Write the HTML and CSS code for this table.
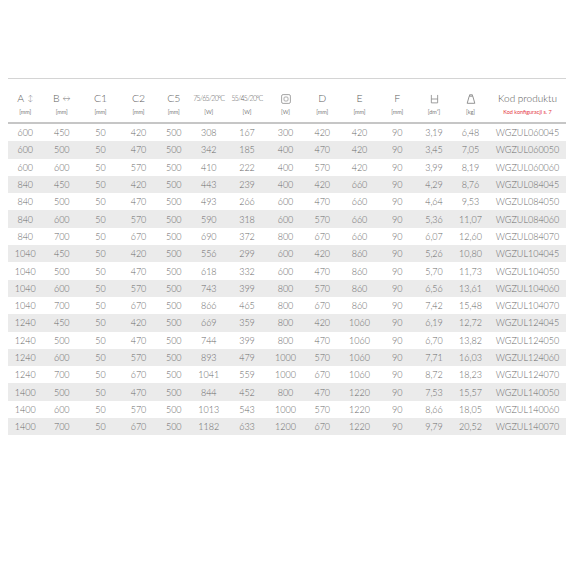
FILE: index.html
```html
<!DOCTYPE html>
<html>
<head>
<meta charset="utf-8">
<link rel="stylesheet" href="styles.css">
</head>
<body>
<div class="sheet">
  <div class="head">
    <div class="hc"><span class="lbl">A <span class="arr">↕</span></span><span class="unit">[mm]</span></div>
    <div class="hc"><span class="lbl">B <span class="arr">↔</span></span><span class="unit">[mm]</span></div>
    <div class="hc"><span class="lbl">C1</span><span class="unit">[mm]</span></div>
    <div class="hc"><span class="lbl">C2</span><span class="unit">[mm]</span></div>
    <div class="hc"><span class="lbl">C5</span><span class="unit">[mm]</span></div>
    <div class="hc"><span class="lbl tiny">75/65/20°C</span><span class="unit">[W]</span></div>
    <div class="hc"><span class="lbl tiny">55/45/20°C</span><span class="unit">[W]</span></div>
    <div class="hc"><span class="lbl"><svg class="ico" viewBox="0 0 10 10" width="10" height="10"><rect x="0.6" y="0.6" width="8.8" height="8.8" rx="1.5" fill="none" stroke="#9a9a9a" stroke-width="0.9"/><rect x="3" y="3" width="4" height="4" rx="1" fill="none" stroke="#9a9a9a" stroke-width="0.8"/></svg></span><span class="unit">[W]</span></div>
    <div class="hc"><span class="lbl">D</span><span class="unit">[mm]</span></div>
    <div class="hc"><span class="lbl">E</span><span class="unit">[mm]</span></div>
    <div class="hc"><span class="lbl">F</span><span class="unit">[mm]</span></div>
    <div class="hc"><span class="lbl"><svg class="ico" viewBox="0 0 10 10" width="9" height="10"><path d="M1.5 0.5V9.3H8.5V0.5M1.5 5H8.5" fill="none" stroke="#888" stroke-width="0.9"/></svg></span><span class="unit">[dm²]</span></div>
    <div class="hc"><span class="lbl"><svg class="ico" viewBox="0 0 10 10" width="10" height="10"><path d="M3.6 2.2V0.8H6.4V2.2M3.2 2.2H6.8L8.8 9.3H1.2Z" fill="none" stroke="#888" stroke-width="0.9" stroke-linejoin="round"/></svg></span><span class="unit">[kg]</span></div>
    <div class="hc"><span class="lbl kod">Kod produktu</span><span class="unit red">Kod konfiguracji s. 7</span></div>
  </div>
  <div class="body">
    <div class="row"><span>600</span><span>450</span><span>50</span><span>420</span><span>500</span><span>308</span><span>167</span><span>300</span><span>420</span><span>420</span><span>90</span><span>3,19</span><span>6,48</span><span>WGZUL060045</span></div>
    <div class="row"><span>600</span><span>500</span><span>50</span><span>470</span><span>500</span><span>342</span><span>185</span><span>400</span><span>470</span><span>420</span><span>90</span><span>3,45</span><span>7,05</span><span>WGZUL060050</span></div>
    <div class="row"><span>600</span><span>600</span><span>50</span><span>570</span><span>500</span><span>410</span><span>222</span><span>400</span><span>570</span><span>420</span><span>90</span><span>3,99</span><span>8,19</span><span>WGZUL060060</span></div>
    <div class="row"><span>840</span><span>450</span><span>50</span><span>420</span><span>500</span><span>443</span><span>239</span><span>400</span><span>420</span><span>660</span><span>90</span><span>4,29</span><span>8,76</span><span>WGZUL084045</span></div>
    <div class="row"><span>840</span><span>500</span><span>50</span><span>470</span><span>500</span><span>493</span><span>266</span><span>600</span><span>470</span><span>660</span><span>90</span><span>4,64</span><span>9,53</span><span>WGZUL084050</span></div>
    <div class="row"><span>840</span><span>600</span><span>50</span><span>570</span><span>500</span><span>590</span><span>318</span><span>600</span><span>570</span><span>660</span><span>90</span><span>5,36</span><span>11,07</span><span>WGZUL084060</span></div>
    <div class="row"><span>840</span><span>700</span><span>50</span><span>670</span><span>500</span><span>690</span><span>372</span><span>800</span><span>670</span><span>660</span><span>90</span><span>6,07</span><span>12,60</span><span>WGZUL084070</span></div>
    <div class="row"><span>1040</span><span>450</span><span>50</span><span>420</span><span>500</span><span>556</span><span>299</span><span>600</span><span>420</span><span>860</span><span>90</span><span>5,26</span><span>10,80</span><span>WGZUL104045</span></div>
    <div class="row"><span>1040</span><span>500</span><span>50</span><span>470</span><span>500</span><span>618</span><span>332</span><span>600</span><span>470</span><span>860</span><span>90</span><span>5,70</span><span>11,73</span><span>WGZUL104050</span></div>
    <div class="row"><span>1040</span><span>600</span><span>50</span><span>570</span><span>500</span><span>743</span><span>399</span><span>800</span><span>570</span><span>860</span><span>90</span><span>6,56</span><span>13,61</span><span>WGZUL104060</span></div>
    <div class="row"><span>1040</span><span>700</span><span>50</span><span>670</span><span>500</span><span>866</span><span>465</span><span>800</span><span>670</span><span>860</span><span>90</span><span>7,42</span><span>15,48</span><span>WGZUL104070</span></div>
    <div class="row"><span>1240</span><span>450</span><span>50</span><span>420</span><span>500</span><span>669</span><span>359</span><span>800</span><span>420</span><span>1060</span><span>90</span><span>6,19</span><span>12,72</span><span>WGZUL124045</span></div>
    <div class="row"><span>1240</span><span>500</span><span>50</span><span>470</span><span>500</span><span>744</span><span>399</span><span>800</span><span>470</span><span>1060</span><span>90</span><span>6,70</span><span>13,82</span><span>WGZUL124050</span></div>
    <div class="row"><span>1240</span><span>600</span><span>50</span><span>570</span><span>500</span><span>893</span><span>479</span><span>1000</span><span>570</span><span>1060</span><span>90</span><span>7,71</span><span>16,03</span><span>WGZUL124060</span></div>
    <div class="row"><span>1240</span><span>700</span><span>50</span><span>670</span><span>500</span><span>1041</span><span>559</span><span>1000</span><span>670</span><span>1060</span><span>90</span><span>8,72</span><span>18,23</span><span>WGZUL124070</span></div>
    <div class="row"><span>1400</span><span>500</span><span>50</span><span>470</span><span>500</span><span>844</span><span>452</span><span>800</span><span>470</span><span>1220</span><span>90</span><span>7,53</span><span>15,57</span><span>WGZUL140050</span></div>
    <div class="row"><span>1400</span><span>600</span><span>50</span><span>570</span><span>500</span><span>1013</span><span>543</span><span>1000</span><span>570</span><span>1220</span><span>90</span><span>8,66</span><span>18,05</span><span>WGZUL140060</span></div>
    <div class="row"><span>1400</span><span>700</span><span>50</span><span>670</span><span>500</span><span>1182</span><span>633</span><span>1200</span><span>670</span><span>1220</span><span>90</span><span>9,79</span><span>20,52</span><span>WGZUL140070</span></div>
  </div>
</div>
</body>
</html>
```
FILE: styles.css
```css
html, body {
  margin: 0;
  padding: 0;
  background: #ffffff;
}
body {
  font-family: Lato, "Open Sans", "Liberation Sans", sans-serif;
  font-weight: 300;
  color: #6a6a6a;
}
.sheet {
  margin: 78px 0 0 8px;
  width: 558px;
}
.head, .row {
  display: grid;
  grid-template-columns: 34.5px 38.5px 39px 37px 33.5px 36.5px 40px 37px 36.5px 38px 37.5px 36px 37px 77px;
}
.head {
  border-top: 1.5px solid #d4d4d4;
  border-bottom: 2px solid #c6c6c6;
  height: 43px;
  box-sizing: content-box;
}
.hc {
  display: flex;
  flex-direction: column;
  align-items: center;
  padding-top: 13px;
}
.lbl {
  font-size: 10.5px;
  line-height: 13px;
  height: 13px;
  color: #5e5e5e;
  white-space: nowrap;
  display: flex;
  align-items: center;
}
.arr {
  font-size: 8px;
  margin-left: 3px;
  color: #777;
}
.tiny {
  font-size: 7px;
  letter-spacing: -0.7px;
  color: #5a5a5a;
}
.kod {
  font-size: 10px;
  color: #555;
}
.ico {
  display: block;
}
.unit {
  font-size: 5.5px;
  line-height: 7px;
  margin-top: 4px;
  color: #7a7a7a;
  font-weight: 400;
  white-space: nowrap;
}
.red {
  color: #e53a45;
}
.row {
  height: 17.3px;
  align-items: center;
  font-size: 9px;
}
.row span {
  text-align: center;
  white-space: nowrap;
}
.row:nth-child(even) {
  background: #ebebeb;
}
```
